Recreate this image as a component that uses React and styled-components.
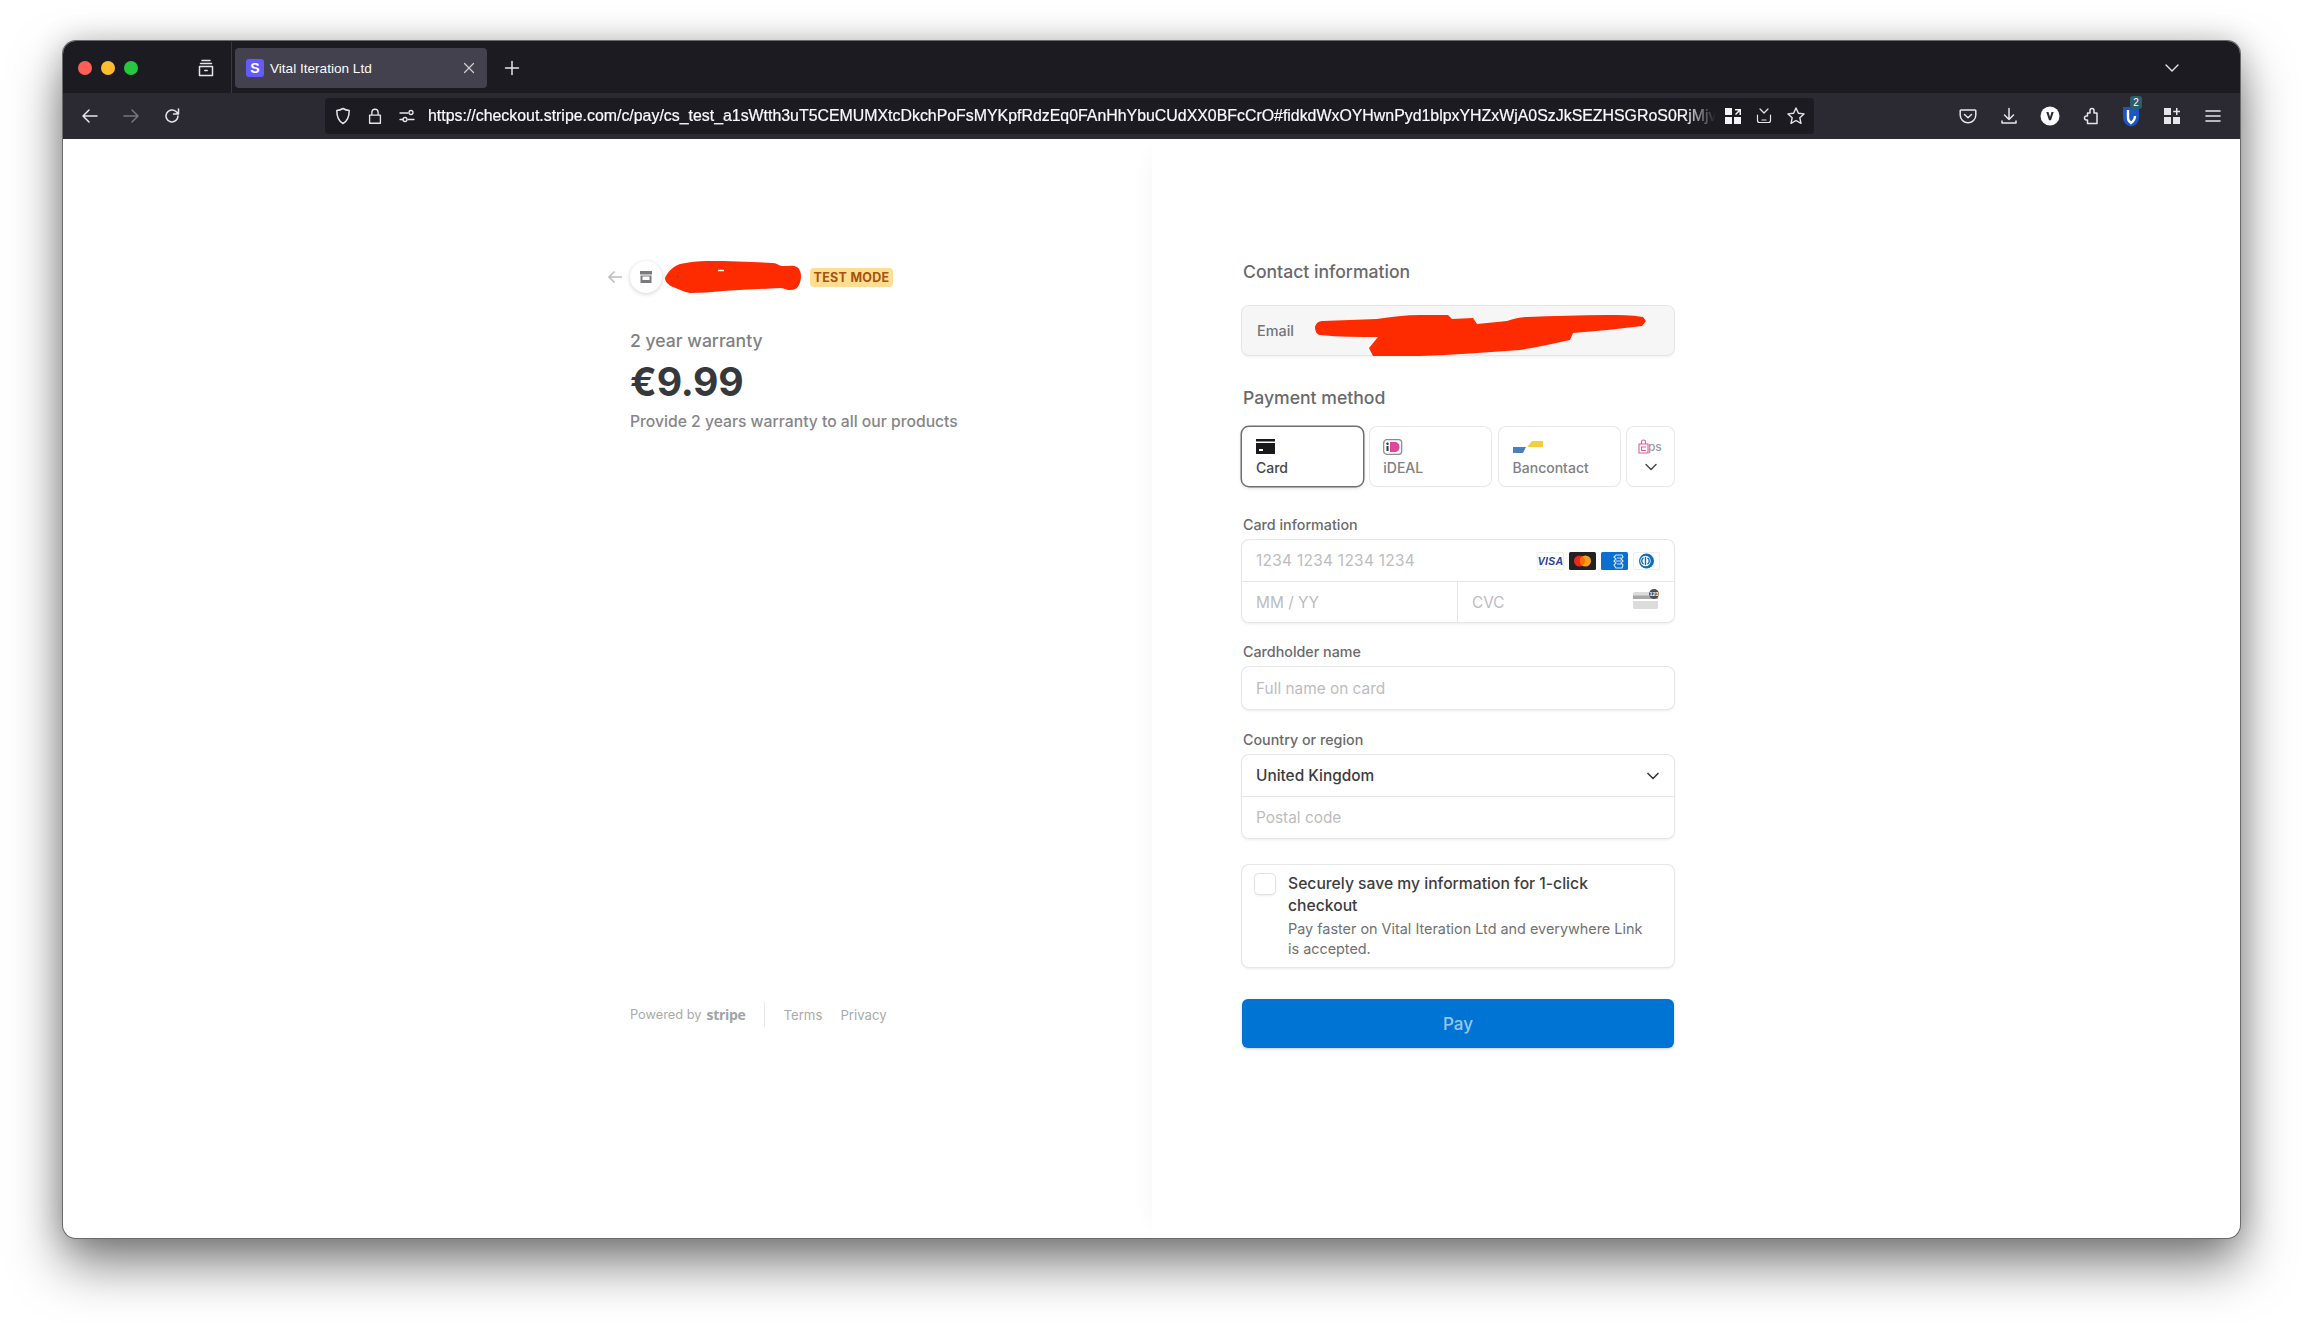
import React from 'react';
import styled, { createGlobalStyle } from 'styled-components';

const Global = createGlobalStyle`
  html, body { margin: 0; padding: 0; background: #fff; }
  body { font-family: Inter, "Liberation Sans", sans-serif; -webkit-font-smoothing: antialiased; }
  * { box-sizing: border-box; }
`;

const Page = styled.div`
  width: 2304px; height: 1323px; padding: 41px 0 0 63px; overflow: hidden; background: #fff;
`;
const Win = styled.div`
  width: 2177px; height: 1197px; border-radius: 13px; overflow: hidden; background: #fff;
  box-shadow: 0 0 0 1px #6a6a6a;
  display: flex; flex-direction: column;
`;
const WinWrap = styled.div`
  width: 2177px; height: 1197px; border-radius: 13px;
  box-shadow: 0 26px 52px rgba(0,0,0,.5), 0 0 30px rgba(0,0,0,.2);
`;
const TabBar = styled.div`
  height: 52px; padding-top: 2px; flex: none; background: #1c1b22; display: flex; align-items: center; position: relative;
`;
const Light = styled.span`
  width: 14px; height: 14px; border-radius: 50%; background: ${p => p.$c}; flex: none; margin-right: ${p => p.$mr}px;
`;
const Lights = styled.div`
  display: flex; margin-left: 15px; width: 118px;
`;
const TabSep = styled.div`
  width: 1px; height: 52px; background: #3a3940; margin-left: 15px; margin-right: 3px;
`;
const Tab = styled.div`
  width: 252px; height: 40px; border-radius: 4px; background: #42414d; display: flex; align-items: center; padding: 0 11px;
`;
const Favicon = styled.span`
  width: 18px; height: 18px; border-radius: 3px; background: #635bff; color: #fff; font: 700 14px "Liberation Sans", sans-serif;
  display: flex; align-items: center; justify-content: center; margin-right: 6px;
`;
const TabTitle = styled.span`
  font: 400 13.6px "Liberation Sans", sans-serif; color: #fbfbfe; flex: 1; white-space: nowrap;
`;
const Spacer = styled.div`flex: 1;`;
const ToolBar = styled.div`
  height: 46px; flex: none; background: #2b2a33; display: flex; align-items: center; position: relative;
`;
const IconSlot = styled.span`
  flex: none; display: flex; align-items: center; justify-content: center; width: ${p => p.$w || 24}px; margin-left: ${p => p.$ml || 0}px; margin-right: ${p => p.$mr || 0}px; position: relative;
`;
const UrlBar = styled.div`
  width: 1489px; height: 36px; border-radius: 4px; background: #1c1b22; display: flex; align-items: center; margin-left: 143px; margin-top: -1px;
`;
const Url = styled.div`
  width: 1288px; margin-left: 12px; overflow: hidden; white-space: nowrap; font: 400 15.9px "Liberation Sans", sans-serif; color: #fbfbfe;
  -webkit-text-stroke: .2px #fbfbfe;
  -webkit-mask-image: linear-gradient(to right, #000 97.5%, transparent 100%);
  mask-image: linear-gradient(to right, #000 97.5%, transparent 100%);
`;
const Badge = styled.span`
  position: absolute; top: -9px; right: -1px; width: 12px; height: 13px; border-radius: 3px; background: #2d5c6b; color: #fff; font: 400 10px "Liberation Sans", sans-serif; text-align: center; line-height: 13px;
`;

const Content = styled.div`
  flex: 1; display: grid; grid-template-columns: 1089px 1088px; min-height: 0;
`;
const Left = styled.div`
  padding: 122px 0 0 544px; display: flex; flex-direction: column;
`;
const Right = styled.div`
  padding: 121px 0 0 90px; box-shadow: -12px 0 24px -14px rgba(0,0,0,.05);
`;
const LogoRow = styled.div`
  display: flex; align-items: center; height: 32px;
`;
const StoreCircle = styled.span`
  width: 32px; height: 32px; border-radius: 50%; background: #fff; box-shadow: 0 1px 4px rgba(0,0,0,.18);
  display: flex; align-items: center; justify-content: center; margin: 0 3px 0 7px;
`;
const TestBadge = styled.span`
  width: 83px; height: 19px; border-radius: 4px; background: #ffde92; color: #a4540e; font-size: 12.5px; font-weight: 700; letter-spacing: .3px;
  display: flex; align-items: center; justify-content: center; margin-left: 8px;
`;
const Product = styled.div`
  padding-left: 23px;
`;
const ProdName = styled.div`
  margin-top: 36px; font-size: 17.6px; font-weight: 500; line-height: 24px; color: #808183;
`;
const Price = styled.div`
  margin-top: 4px; font-size: 39.2px; font-weight: 700; line-height: 50px; color: #37383b; letter-spacing: -.2px;
`;
const ProdDesc = styled.div`
  margin-top: 4px; font-size: 15.7px; font-weight: 500; line-height: 22px; color: #858688; white-space: nowrap;
`;
const Foot = styled.div`
  margin-top: 569px; display: flex; align-items: center; height: 25px; padding-left: 23px; font-size: 12.8px; font-weight: 400; color: #a9aaac;
`;
const Stripe = styled.b`
  font: 700 14px "Open Sans", sans-serif; color: #a2a3a5; margin-left: 5px; letter-spacing: -.3px;
`;
const FootSep = styled.span`
  width: 1px; height: 25px; background: #e9e9ea; margin: 0 19px 0 18px;
`;
const FootLink = styled.span`
  margin-right: 18px; font-size: 13.2px;
`;

const Form = styled.div`
  width: 432px; display: flex; flex-direction: column;
`;
const H2 = styled.div`
  font-size: 17.6px; font-weight: 500; line-height: 24px; color: #69696b; padding-left: 1px;
  margin-top: ${p => p.$mt || 0}px;
`;
const EmailBox = styled.div`
  margin-top: 22px; height: 49px; border-radius: 7px; background: #f6f6f6; position: relative;
  box-shadow: 0 0 0 1px #e6e6e6, 0 2px 3px rgba(0,0,0,.07);
  display: flex; align-items: center; padding-left: 15px; font-size: 14.4px; color: #747476; font-weight: 500;
`;
const EmailInk = styled.svg`
  position: absolute; left: 73px; top: 8px;
`;
const PayTabs = styled.div`
  margin-top: 17px; display: grid; grid-template-columns: 121px 121px 121px 47px; gap: 7.3px;
`;
const PayTab = styled.div`
  height: 59px; border-radius: 7px; padding: 10px 0 0 ${p => p.$pl || 14}px; background: #fff; font-size: 14px; font-weight: 500; line-height: 18px;
  color: ${p => p.$active ? '#46464a' : '#808083'};
  box-shadow: ${p => p.$active ? '0 0 0 1.5px #6f6f72, 0 2px 4px rgba(0,0,0,.15)' : '0 0 0 1px #e8e8e8, 0 1px 2px rgba(0,0,0,.05)'};
  display: flex; flex-direction: column;
`;
const TabIcon = styled.span`
  height: 19px; display: flex; align-items: center; margin-bottom: 3px;
`;
const EpsText = styled.span`
  font: 500 12px Inter, sans-serif; color: #9a9a9c; margin-left: -1px;
`;
const ChevWrap = styled.span`
  padding-left: 6px; display: flex; margin-top: 1px;
`;
const Label = styled.div`
  font-size: 14.3px; font-weight: 500; line-height: 20px; color: #6a6a6c; padding-left: 1px; margin-top: ${p => p.$mt}px; margin-bottom: 5px;
`;
const Group = styled.div`
  border-radius: 7px; background: #fff; box-shadow: 0 0 0 1px #e6e6e6, 0 2px 3px rgba(0,0,0,.08); overflow: hidden;
`;
const Row = styled.div`
  display: flex; height: ${p => p.$h}px; & + & { border-top: 1px solid #e6e6e6; }
`;
const Cell = styled.div`
  flex: ${p => p.$w ? `0 0 ${p.$w}px` : 1}; display: flex; align-items: center; padding: 0 14px; font-size: 15.4px;
  letter-spacing: ${p => p.$ls || 0}px;
  color: ${p => p.$val ? '#3c3c3f' : '#bcbcbe'}; font-weight: ${p => p.$val ? 450 : 400};
  & + & { border-left: 1px solid #e6e6e6; }
`;
const CardIcons = styled.span`
  margin-left: auto; display: flex; gap: 5px; margin-right: 0;
`;
const SaveBox = styled.div`
  margin-top: 27px; height: 102px; border-radius: 7px; background: #fff; box-shadow: 0 0 0 1px #e6e6e6, 0 2px 3px rgba(0,0,0,.08);
  display: flex; padding: 8px 12px 0 13px;
`;
const Check = styled.span`
  width: 20px; height: 20px; flex: none; border-radius: 4px; background: #fff; box-shadow: 0 0 0 1px #e2e2e2, 0 1px 3px rgba(0,0,0,.14); margin: 1px 13px 0 0;
`;
const SaveTitle = styled.div`
  font-size: 15.7px; font-weight: 500; line-height: 21.5px; color: #3d3d40; padding-right: 12px;
`;
const SaveSub = styled.div`
  font-size: 14.4px; font-weight: 400; line-height: 19.5px; color: #717174; margin-top: 3px; padding-right: 12px;
`;
const PayBtn = styled.div`
  margin-top: 32px; height: 49px; border-radius: 6px; background: #0074d4; color: rgba(255,255,255,.62); font-size: 17px; font-weight: 500;
  display: flex; align-items: center; justify-content: center; box-shadow: 0 1px 3px rgba(0,0,0,.2);
`;

const Stroke = ({ children, w = 20, h = 20, vb = '0 0 20 20', c = '#e6e6ea', sw = 1.5 }) => (
  <svg width={w} height={h} viewBox={vb} fill="none" stroke={c} strokeWidth={sw} strokeLinecap="round" strokeLinejoin="round">{children}</svg>
);

const URL_TEXT = 'https://checkout.stripe.com/c/pay/cs_test_a1sWtth3uT5CEMUMXtcDkchPoFsMYKpfRdzEq0FAnHhYbuCUdXX0BFcCrO#fidkdWxOYHwnPyd1blpxYHZxWjA0SzJkSEZHSGRoS0RjMjv';

export default function App() {
  return (
    <Page>
      <Global />
      <WinWrap>
        <Win>
          <TabBar>
            <Lights>
              <Light $c="#fe5f57" $mr={9} />
              <Light $c="#febc2e" $mr={9} />
              <Light $c="#27c83f" $mr={0} />
            </Lights>
            <IconSlot $w={20}>
              <Stroke><path d="M6 2.500h8M4.500 5.500h11M3.500 8.500h13v9h-13zM8.800 12.500h2.400" /></Stroke>
            </IconSlot>
            <TabSep />
            <Tab>
              <Favicon>S</Favicon>
              <TabTitle>Vital Iteration Ltd</TabTitle>
              <Stroke w={14} h={14} vb="0 0 14 14" c="#cfcfd4" sw={1.2}><path d="M2.500 2.500l9 9M11.500 2.500l-9 9" /></Stroke>
            </Tab>
            <IconSlot $w={16} $ml={17}>
              <Stroke w={16} h={16} vb="0 0 16 16" sw={1.5}><path d="M8 1.500v13M1.500 8h13" /></Stroke>
            </IconSlot>
            <Spacer />
            <IconSlot $w={16} $mr={60}>
              <Stroke w={16} h={16} vb="0 0 16 16" sw={1.4}><path d="M2 5l6 6 6-6" /></Stroke>
            </IconSlot>
          </TabBar>
          <ToolBar>
            <IconSlot $w={20} $ml={17}>
              <Stroke><path d="M17 10H3.500M9 4l-6 6 6 6" /></Stroke>
            </IconSlot>
            <IconSlot $w={20} $ml={21}>
              <Stroke c="#77767d"><path d="M3 10h13.500M11 4l6 6-6 6" /></Stroke>
            </IconSlot>
            <IconSlot $w={20} $ml={21}>
              <Stroke><path d="M16 10a6 6 0 1 1-2-4.500L16 7.500M16.500 3v5h-5" /></Stroke>
            </IconSlot>
            <UrlBar>
              <IconSlot $w={20} $ml={8}>
                <Stroke><path d="M10 2.500c2 1.200 4 1.800 6.200 2 0 6-1.500 10.500-6.200 13-4.700-2.500-6.200-7-6.200-13 2.200-.2 4.200-.8 6.200-2z" /></Stroke>
              </IconSlot>
              <IconSlot $w={18} $ml={13}>
                <Stroke w={18} h={20}><path d="M4 9h12v9H4zM6.500 9V6a3.500 3.500 0 0 1 7 0v3" /></Stroke>
              </IconSlot>
              <IconSlot $w={18} $ml={14}>
                <Stroke w={18} h={18} vb="0 0 18 18" sw={1.3}><path d="M2 6h8M2 12.500h3M10 12.500h6" /><circle cx="13" cy="5.500" r="2" /><circle cx="7" cy="12.500" r="2" /></Stroke>
              </IconSlot>
              <Url>{URL_TEXT}</Url>
              <IconSlot $w={18} $ml={8}>
                <svg width="18" height="18" viewBox="0 0 18 18" fill="#f4f4f6"><rect x="1" y="1" width="7" height="7" /><rect x="1" y="10" width="7" height="7" /><rect x="10" y="10" width="7" height="7" /><path d="M11 2h6v6h-1.500V4.500L12 8l-1-1 3.500-3.500H11z" /></svg>
              </IconSlot>
              <IconSlot $w={18} $ml={13}>
                <Stroke w={18} h={18} vb="0 0 18 18" sw={1.2}><path d="M5 2l4 4 4-4M2.500 8v5.500a2 2 0 0 0 2 2h9a2 2 0 0 0 2-2V8M7 13h4" /></Stroke>
              </IconSlot>
              <IconSlot $w={20} $ml={13}>
                <Stroke sw={1.4}><path d="M10 2l2.400 5.300 5.600.6-4.200 3.800 1.200 5.700-5-2.900-5 2.900 1.200-5.700L2 7.900l5.600-.6z" /></Stroke>
              </IconSlot>
            </UrlBar>
            <IconSlot $w={20} $ml={144}>
              <Stroke><path d="M3 4h14a.8.8 0 0 1 .8.8V9a7.800 7.800 0 0 1-15.600 0V4.800A.8.800 0 0 1 3 4zM6.500 8.500l3.500 3.300 3.500-3.300" /></Stroke>
            </IconSlot>
            <IconSlot $w={20} $ml={21}>
              <Stroke><path d="M10 2.500v11M5.500 9l4.500 4.500L14.500 9M3 15v2h14v-2" /></Stroke>
            </IconSlot>
            <IconSlot $w={20} $ml={21}>
              <svg width="20" height="20" viewBox="0 0 20 20"><circle cx="10" cy="10" r="9.500" fill="#fbfbfe" /><path d="M6.300 6h2.200L10 11l1.500-5h2.200L11 14.200H9z" fill="#2b2a33" /></svg>
            </IconSlot>
            <IconSlot $w={20} $ml={21}>
              <Stroke><path d="M11 2.500a2 2 0 0 1 2 2V7h3v10.500H6.500V14H5.500a2 2 0 0 1 0-4h1V7H9V4.500a2 2 0 0 1 2-2z" /></Stroke>
            </IconSlot>
            <IconSlot $w={20} $ml={20}>
              <svg width="20" height="22" viewBox="0 0 20 22"><path d="M2 2h16v11a9 9 0 0 1-8 8.500A9 9 0 0 1 2 13z" fill="#1a56c4" /><path d="M7 5v8c0 2 1 3.500 3 5 2-1.500 4-3.500 4-7" fill="none" stroke="#fff" strokeWidth="2.400" /></svg>
              <Badge>2</Badge>
            </IconSlot>
            <IconSlot $w={20} $ml={21}>
              <svg width="18" height="18" viewBox="0 0 18 18" fill="#e6e6ea"><rect x="1" y="1" width="7" height="7" /><rect x="1" y="10" width="7" height="7" /><rect x="10" y="10" width="7" height="7" /><path d="M13 1h1.500v2.800H17v1.400h-2.500V8H13V5.200h-2.800V3.800H13z" /></svg>
            </IconSlot>
            <IconSlot $w={20} $ml={21}>
              <Stroke sw={1.6}><path d="M3 5h14M3 10h14M3 15h14" /></Stroke>
            </IconSlot>
          </ToolBar>
          <Content>
            <Left>
              <LogoRow>
                <svg width="16" height="16" viewBox="0 0 16 16" fill="none" stroke="#bdbdbf" strokeWidth="1.600"><path d="M15 8H2M7.500 2.500L2 8l5.500 5.500" /></svg>
                <StoreCircle>
                  <svg width="14" height="14" viewBox="0 0 14 14"><path d="M1 1h12v3.500H1z" fill="#7b7b7e" /><path d="M1.500 5.500h11V13h-11z" fill="#7b7b7e" /><path d="M3.500 6.500h7v3.500h-7z" fill="#fff" /></svg>
                </StoreCircle>
                <svg width="137" height="33" viewBox="0 0 137 33"><path d="M0 17C3 10 9 5 15 3 25 1 33 0 42 0c25 0 50 1 66 2 4 0 6 3 9 3 6 0 12-1 15 1 3 2 4 6 4 9 0 5-2 10-4 12-3 2-6 2-9 2-3-1-5-2-8-2-20 1-38 2-57 3-11 1-22 2-33 2-6-1-11-4-17-6C3 24 0 20 0 17z" fill="#fe2a00" /><path d="M53 9.500h6" stroke="#fff" strokeWidth="1.500" /><path d="M12 16l2-1" stroke="#555" strokeWidth="1" /></svg>
                <TestBadge>TEST MODE</TestBadge>
              </LogoRow>
              <Product>
                <ProdName>2 year warranty</ProdName>
                <Price>€9.99</Price>
                <ProdDesc>Provide 2 years warranty to all our products</ProdDesc>
              </Product>
              <Foot>
                Powered by<Stripe>stripe</Stripe>
                <FootSep />
                <FootLink>Terms</FootLink>
                <FootLink>Privacy</FootLink>
              </Foot>
            </Left>
            <Right>
              <Form>
                <H2>Contact information</H2>
                <EmailBox>
                  Email
                  <EmailInk width="335" height="44" viewBox="0 0 335 44"><path d="M0 13C1 9 4 7 8 7c18-1 36-1 54-2 14-2 29-4 43-4h28l4 4c7 0 14-1 21-1l4 6c10-1 20-2 30-3 7-2 13-4 20-4 27-1 53-2 80-2 12 0 24 0 36 2l3 4-4 5c-23 3-46 5-69 7l-3 7c-17 4-33 7-50 10-33 2-67 5-100 6l-47 0-4-8 9-11c-19 0-39 0-58-2C2 21 0 17 0 13z" fill="#fe2a00" /></EmailInk>
                </EmailBox>
                <H2 $mt={31}>Payment method</H2>
                <PayTabs>
                  <PayTab $active>
                    <TabIcon>
                      <svg width="19" height="15" viewBox="0 0 19 15"><path d="M0 0h19v2.500H0z" fill="#1a1a1a" /><path d="M0 4h19v11H0z" fill="#1a1a1a" /><rect x="3" y="10" width="4" height="2" fill="#fff" /></svg>
                    </TabIcon>
                    Card
                  </PayTab>
                  <PayTab $pl={13}>
                    <TabIcon>
                      <svg width="20" height="16" viewBox="0 0 20 16"><rect x=".7" y=".7" width="18" height="14.600" rx="3" fill="#fff" stroke="#8a8a8c" strokeWidth="1.200" /><rect x="3.500" y="7" width="2" height="5" fill="#333" /><circle cx="4.500" cy="4.800" r="1.200" fill="#333" /><path d="M7 3h4.500c3 0 5 2 5 5s-2 5-5 5H7z" fill="#e0469b" /></svg>
                    </TabIcon>
                    iDEAL
                  </PayTab>
                  <PayTab>
                    <TabIcon>
                      <svg width="30" height="14" viewBox="0 0 30 14"><path d="M0 7h13l-3 6H0z" fill="#4a80bf" /><path d="M15 6l4-5h11v6H15z" fill="#f6cd3d" /></svg>
                    </TabIcon>
                    Bancontact
                  </PayTab>
                  <PayTab $pl={11}>
                    <TabIcon>
                      <svg width="11" height="15" viewBox="0 0 11 15" fill="none" stroke="#d9609e" strokeWidth="1.100"><path d="M1 5h9v9H1zM3.500 5V3a2 2 0 0 1 4 0v2M8 8H3.500v3.500H8" /></svg>
                      <EpsText>ps</EpsText>
                    </TabIcon>
                    <ChevWrap>
                      <Stroke w={14} h={14} vb="0 0 14 14" c="#4a4a4d" sw={1.5}><path d="M2 4.500L7 9.500l5-5" /></Stroke>
                    </ChevWrap>
                  </PayTab>
                </PayTabs>
                <Label $mt={29}>Card information</Label>
                <Group>
                  <Row $h={41}>
                    <Cell $ls={0.3}>1234 1234 1234 1234
                      <CardIcons>
                        <svg width="27" height="18" viewBox="0 0 27 18"><rect x=".5" y=".5" width="26" height="17" rx="1.500" fill="#fff" stroke="#eee" /><text x="13.500" y="13" textAnchor="middle" fontFamily="Liberation Sans" fontStyle="italic" fontWeight="700" fontSize="10.500" fill="#2a3da0">VISA</text></svg>
                        <svg width="27" height="18" viewBox="0 0 27 18"><rect width="27" height="18" rx="1.500" fill="#222" /><circle cx="10.500" cy="9" r="5.500" fill="#eb2a1e" /><circle cx="16.500" cy="9" r="5.500" fill="#f79e1b" /><path d="M13.500 4.400a5.500 5.500 0 0 1 0 9.200 5.500 5.500 0 0 1 0-9.200z" fill="#ff6a00" /></svg>
                        <svg width="27" height="18" viewBox="0 0 27 18"><rect width="27" height="18" rx="1.500" fill="#0a6fd0" /><path d="M15 3h6l1 2-2 2 2 2-2 2 2 2-1 3h-6l-2-3 2-2-2-2 2-2-2-2z" fill="none" stroke="#cfe3f7" strokeWidth="1.200" /><path d="M15 9h5M16 6h4M16 12h4" stroke="#cfe3f7" /></svg>
                        <svg width="27" height="18" viewBox="0 0 27 18"><rect x=".5" y=".5" width="26" height="17" rx="1.500" fill="#fff" stroke="#eee" /><circle cx="13.500" cy="9" r="7.500" fill="#0f6cb6" /><circle cx="12.500" cy="9" r="5.200" fill="#fff" /><rect x="11.800" y="4.800" width="1.400" height="8.400" fill="#0f6cb6" /><path d="M10.500 5.800a3.800 3.800 0 0 0 0 6.400M14.500 5.800a3.800 3.800 0 0 1 0 6.400" stroke="#0f6cb6" fill="none" strokeWidth="1.400" /></svg>
                      </CardIcons>
                    </Cell>
                  </Row>
                  <Row $h={41}>
                    <Cell $w={215}>MM / YY</Cell>
                    <Cell>CVC
                      <CardIcons>
                        <svg width="27" height="20" viewBox="0 0 27 20" style={{ marginTop: -7 }}><rect y="3" width="25" height="17" rx="1.500" fill="#dcdcdc" /><rect y="6.500" width="25" height="3.500" fill="#a8a8a8" /><rect y="10" width="25" height="2" fill="#fff" /><circle cx="21" cy="5" r="5" fill="#4e4e50" /><text x="21" y="7" textAnchor="middle" fontFamily="Liberation Sans" fontSize="5.500" fontWeight="700" fill="#fff">123</text></svg>
                      </CardIcons>
                    </Cell>
                  </Row>
                </Group>
                <Label $mt={20}>Cardholder name</Label>
                <Group>
                  <Row $h={42}><Cell>Full name on card</Cell></Row>
                </Group>
                <Label $mt={21}>Country or region</Label>
                <Group>
                  <Row $h={41}>
                    <Cell $val>United Kingdom
                      <CardIcons>
                        <Stroke w={14} h={14} vb="0 0 14 14" c="#3c3c3f" sw={1.7}><path d="M2 4.500L7 9.500l5-5" /></Stroke>
                      </CardIcons>
                    </Cell>
                  </Row>
                  <Row $h={42}><Cell>Postal code</Cell></Row>
                </Group>
                <SaveBox>
                  <Check />
                  <div>
                    <SaveTitle>Securely save my information for 1-click checkout</SaveTitle>
                    <SaveSub>Pay faster on Vital Iteration Ltd and everywhere Link is accepted.</SaveSub>
                  </div>
                </SaveBox>
                <PayBtn>Pay</PayBtn>
              </Form>
            </Right>
          </Content>
        </Win>
      </WinWrap>
    </Page>
  );
}
